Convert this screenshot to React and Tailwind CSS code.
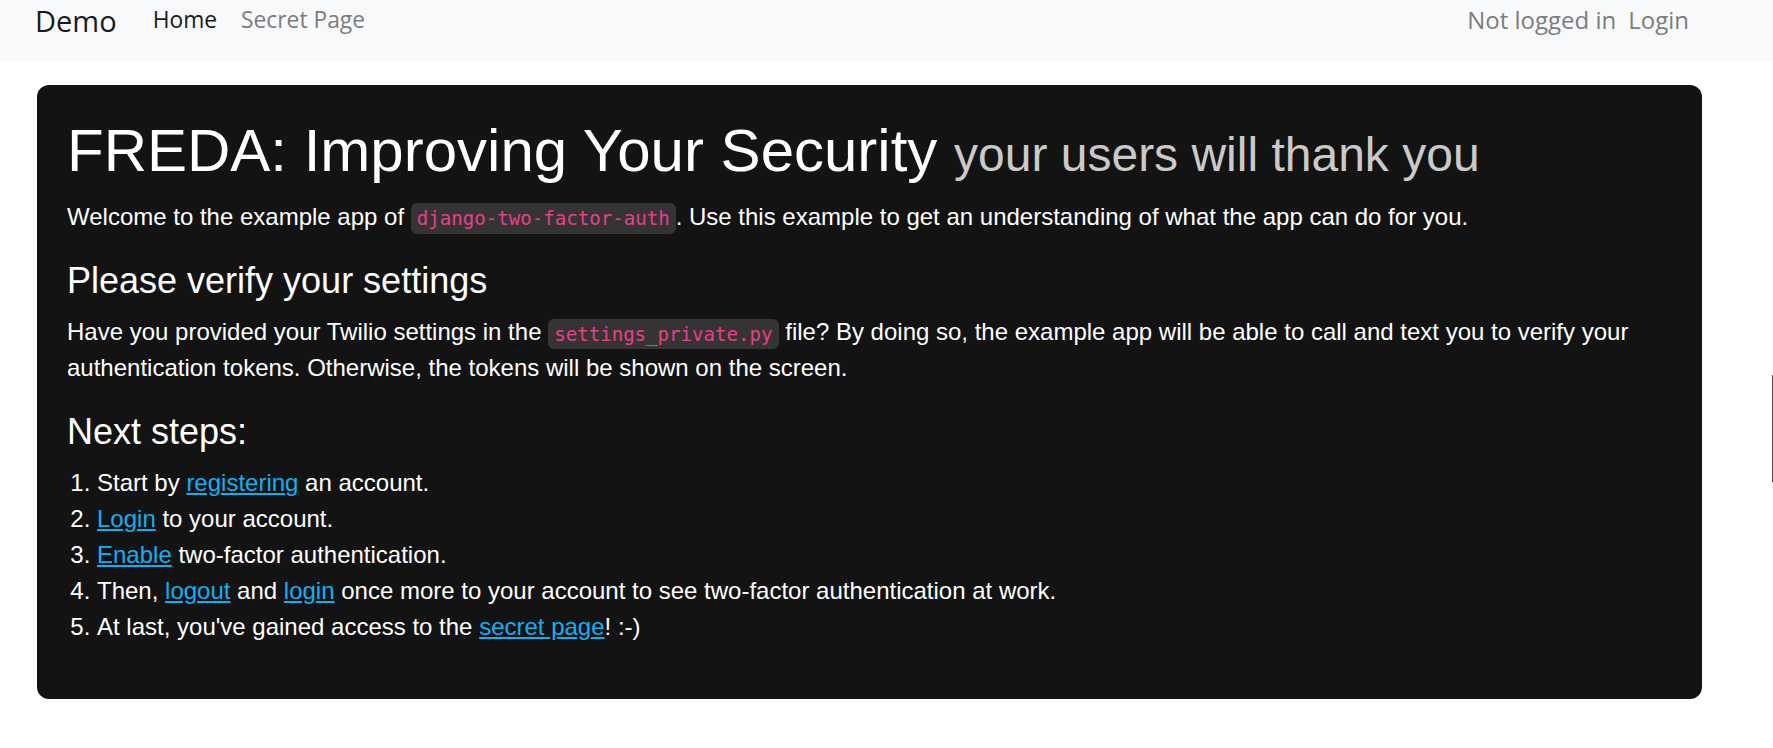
import React from "react";

const navFont = { fontFamily: '"Open Sans", "Noto Sans", sans-serif' };

function Code({ children }) {
  return (
    <code className="rounded-[6px] bg-[#343434] px-[6px] py-[3.7px] font-['DejaVu_Sans_Mono',monospace] text-[19.1px] leading-none text-[#e83e8c]">
      {children}
    </code>
  );
}

function A({ children }) {
  return <a href="#" className="text-[#0bb2f2] underline">{children}</a>;
}

export default function App() {
  return (
    <div className="relative min-h-[748px] w-full overflow-hidden bg-white">
      <nav className="flex h-[61px] items-start bg-[#f8f9fa] pl-[35px] pr-[72px]" style={navFont}>
        <span className="mt-[-2.2px] mr-[24px] text-[29px] leading-[45px] text-[#1a1a1a]">Demo</span>
        <div className="mt-[2.2px] flex text-[22.8px] leading-[36px]">
          <a href="#" className="px-[12px] text-[#1a1a1a]">Home</a>
          <a href="#" className="px-[12px] text-[#7c7d7d]">Secret Page</a>
        </div>
        <div className="ml-auto mt-[1.6px] flex text-[24px] leading-[36px] text-[#7c7d7d]">
          <span>Not logged in</span>
          <a href="#" className="px-[12px]">Login</a>
        </div>
      </nav>

      <div className="ml-[37px] mt-[24px] w-[1665px] rounded-[12px] bg-[#131313] p-[30px] font-['Liberation_Sans',Arial,sans-serif] text-[24px] leading-[36px] text-white">
        <h1 className="mb-[12px] text-[60px] font-normal leading-[1.2]">
          FREDA: Improving Your Security{" "}
          <span className="text-[48px] text-[#cacaca]">your users will thank you</span>
        </h1>
        <p className="mb-[24px]">
          Welcome to the example app of <Code>django-two-factor-auth</Code>. Use this example to get an understanding of what the app can do for you.
        </p>
        <h4 className="mb-[12px] text-[36px] font-normal leading-[43.2px]">Please verify your settings</h4>
        <p className="mb-[24px]">
          Have you provided your Twilio settings in the <Code>settings_private.py</Code> file? By doing so, the example app will be able to call and text you to verify your authentication tokens. Otherwise, the tokens will be shown on the screen.
        </p>
        <h4 className="mb-[12px] text-[36px] font-normal leading-[43.2px]">Next steps:</h4>
        <ol className="mb-[24px] list-decimal pl-[30px]">
          <li>Start by <A>registering</A> an account.</li>
          <li><A>Login</A> to your account.</li>
          <li><A>Enable</A> two-factor authentication.</li>
          <li>Then, <A>logout</A> and <A>login</A> once more to your account to see two-factor authentication at work.</li>
          <li>At last, you've gained access to the <A>secret page</A>! :-)</li>
        </ol>
      </div>

      <div className="absolute right-0 top-[375px] h-[107px] w-px bg-[#505050]" />
    </div>
  );
}
